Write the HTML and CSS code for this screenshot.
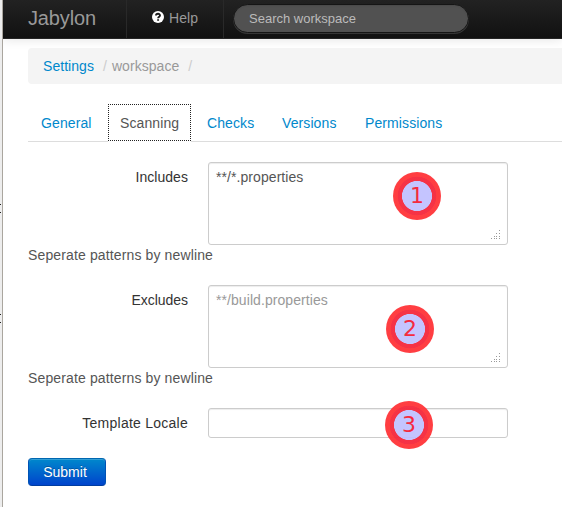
FILE: index.html
```html
<!DOCTYPE html>
<html lang="en">
<head>
<meta charset="utf-8">
<title>Jabylon</title>
<link rel="stylesheet" href="styles.css">
</head>
<body>
<div class="window-edge"><i class="tick tick-a"></i><i class="tick tick-b"></i></div>
<div class="page">
  <header class="navbar">
    <a class="brand">Jabylon</a>
    <a class="help">
      <svg width="12" height="12" viewBox="0 0 12 12"><circle cx="6" cy="6" r="6" fill="#fff"/><path d="M4 4.6C4 2.2 8.1 2.2 8 4.5C8 5.8 6.2 5.7 6.1 7.2M6.1 8.3V9.8" fill="none" stroke="#1b1b1b" stroke-width="1.9"/></svg>
      <span>Help</span>
    </a>
    <input class="search" type="text" placeholder="Search workspace">
  </header>
  <main class="content">
    <nav class="breadcrumb"><a>Settings</a><i>/</i><span>workspace</span><i class="last">/</i></nav>
    <nav class="tabs">
      <a>General</a><a class="active">Scanning</a><a>Checks</a><a>Versions</a><a>Permissions</a>
    </nav>
    <form>
      <div class="group">
        <div class="row">
          <label>Includes</label>
          <div class="field">
            <textarea>**/*.properties</textarea>
            <svg class="grip" width="10" height="10" viewBox="0 0 10 10"><path d="M8 .5h1M5 3.5h1M8 3.5h1M3 6.5h1M5 6.5h1M8 6.5h1M0 8.5h1M3 8.5h1M5 8.5h1M8 8.5h1" stroke="#999"/></svg>
            <b class="badge one">1</b>
          </div>
        </div>
        <p>Seperate patterns by newline</p>
      </div>
      <div class="group">
        <div class="row">
          <label class="tight">Excludes</label>
          <div class="field">
            <textarea placeholder="**/build.properties"></textarea>
            <svg class="grip" width="10" height="10" viewBox="0 0 10 10"><path d="M8 .5h1M5 3.5h1M8 3.5h1M3 6.5h1M5 6.5h1M8 6.5h1M0 8.5h1M3 8.5h1M5 8.5h1M8 8.5h1" stroke="#999"/></svg>
            <b class="badge two">2</b>
          </div>
        </div>
        <p>Seperate patterns by newline</p>
      </div>
      <div class="group">
        <div class="row">
          <label class="loose">Template Locale</label>
          <div class="field">
            <input class="text" type="text">
            <b class="badge three">3</b>
          </div>
        </div>
      </div>
      <button type="button">Submit</button>
    </form>
  </main>
</div>
</body>
</html>
```
FILE: styles.css
```css
* { box-sizing: border-box; }
body {
  margin: 0;
  height: 507px;
  overflow: hidden;
  display: flex;
  background: #fff;
  color: #555;
  font: 14px/20px "Liberation Sans", Arial, sans-serif;
}
.window-edge {
  position: relative;
  flex: none;
  width: 3px;
  background: #ededed;
  border-right: 1px solid #aaa69f;
}
.tick {
  position: absolute;
  left: 0;
  width: 1px;
  height: 9px;
  border: solid #222;
  border-width: 1px 0;
}
.tick-a { top: 204px; }
.tick-b { top: 314px; }
.page { flex: 1; min-width: 0; }
.navbar {
  height: 39px;
  display: flex;
  padding-left: 25px;
  background: linear-gradient(#222, #111);
  border-bottom: 1px solid #252525;
  box-shadow: 0 1px 10px rgba(0, 0, 0, .1);
  color: #999;
}
.brand {
  width: 99px;
  padding-top: 8px;
  font-size: 20px;
  letter-spacing: -.15px;
  border-right: 1px solid #292929;
}
.help {
  width: 97px;
  display: flex;
  padding: 11px 0 0 25px;
  line-height: 14px;
  letter-spacing: .1px;
  border-right: 1px solid #292929;
}
.help span { margin: 0 0 0 5px; }
.search {
  width: 236px;
  height: 29px;
  margin: 4px 0 0 9px;
  padding: 0 15px;
  border: 1px solid #151515;
  border-radius: 15px;
  outline: 0;
  background: #515151;
  box-shadow: inset 0 1px 2px rgba(0, 0, 0, .1), 0 1px 0 rgba(255, 255, 255, .15);
  font: 13px "Liberation Sans", Arial, sans-serif;
}
.search::placeholder { color: #bbb; opacity: 1; }
.content { padding: 9px 0 0 25px; }
.breadcrumb {
  height: 36px;
  padding: 8px 15px;
  background: #f4f4f4;
  border-radius: 4px 0 0 4px;
  color: #999;
  letter-spacing: .05px;
}
.breadcrumb i { padding: 0 5px 0 9px; color: #ccc; font-style: normal; }
a { color: inherit; text-decoration: none; }
.breadcrumb a, .tabs a { color: #08c; }
.tabs {
  display: flex;
  height: 38px;
  margin-top: 20px;
  border-bottom: 1px solid #ddd;
  letter-spacing: .1px;
}
.tabs a {
  height: 38px;
  padding: 9px 13px;
  margin-right: 2px;
}
.tabs a:first-child { width: 78px; }
.tabs a:nth-child(3) { width: 73px; }
.tabs a:nth-child(4) { width: 81px; }
.tabs .active {
  width: 83px;
  height: 37px;
  border: 1px dotted #222;
  padding: 8px 11px;
  margin-right: 3px;
  color: #555;
  background: #fff;
  box-shadow: 0 1px #fff;
}
form { margin-top: 20px; }
.group { margin-bottom: 20px; }
.row { display: flex; }
label {
  width: 160px;
  padding-top: 5px;
  margin-right: 20px;
  text-align: right;
  color: #333;
  letter-spacing: .05px;
}
.tight { letter-spacing: -.05px; }
.loose { letter-spacing: .25px; }
.field { position: relative; width: 300px; }
textarea, .text {
  display: block;
  width: 300px;
  height: 83px;
  padding: 4px 7px;
  border: 1px solid #ccc;
  border-radius: 3px;
  outline: 0;
  resize: none;
  overflow: hidden;
  background: #fff;
  box-shadow: inset 0 1px 1px rgba(0, 0, 0, .075);
  color: #555;
  font: 14px/20px "Liberation Sans", Arial, sans-serif;
  letter-spacing: .07px;
}
.text { height: 30px; }
textarea::placeholder { color: #999; opacity: 1; }
.grip { position: absolute; right: 7px; bottom: 5px; }
p { margin: 0; letter-spacing: .13px; }
.badge {
  position: absolute;
  width: 48px;
  height: 48px;
  border-radius: 50%;
  background: radial-gradient(circle, rgba(191, 191, 255, .92) 14.7px, rgba(245, 42, 62, .96) 15.3px 19px, rgba(255, 54, 58, .96) 19.6px);
  color: #f52a3e;
  font: 22px/48px "DejaVu Sans", sans-serif;
  text-align: center;
}
.one { left: 185px; top: 10px; }
.two { left: 178px; top: 20px; }
.three { left: 177px; top: -7px; }
button {
  display: block;
  width: 78px;
  height: 28px;
  padding: 0 4px 1px 0;
  border: 1px solid;
  border-color: #0067b0 #0052b4 #003da0;
  border-radius: 4px;
  background: linear-gradient(#08c, #04c);
  box-shadow: inset 0 1px rgba(255, 255, 255, .2);
  color: #fff;
  font: 14px/20px "Liberation Sans", Arial, sans-serif;
  text-shadow: 0 -1px rgba(0, 0, 0, .25);
}
```
